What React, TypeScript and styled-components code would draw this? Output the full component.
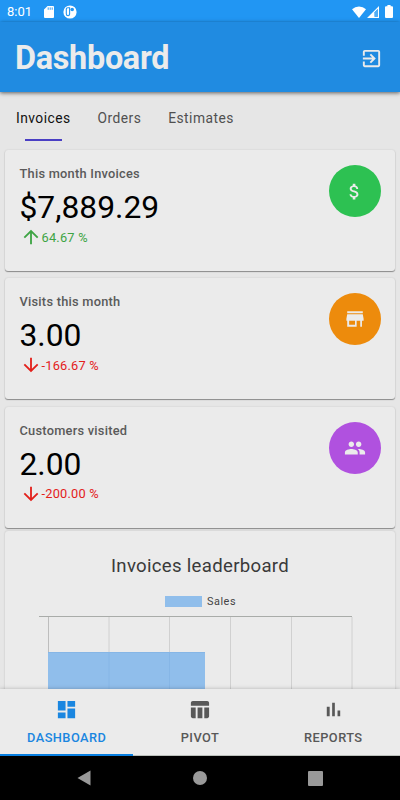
import React from 'react';
import styled, { createGlobalStyle } from 'styled-components';

const GlobalStyle = createGlobalStyle`
  * { box-sizing: border-box; }
  body { margin: 0; font-family: Roboto, sans-serif; background: #e6e6e6; }
`;

const Screen = styled.div`
  width: 400px;
  height: 800px;
  display: flex;
  flex-direction: column;
  overflow: hidden;
  background: #e6e6e6;
`;

const StatusBar = styled.div`
  height: 22px;
  flex: none;
  display: flex;
  align-items: center;
  padding: 1px 5px 0 7px;
  background: #2196f3;
  color: #fff;
`;

const Clock = styled.span`
  width: 37px;
  font-size: 13px;
  line-height: 20px;
`;

const StatusIcon = styled.svg<{ $gap?: number }>`
  display: block;
  flex: none;
  margin-right: ${(p) => p.$gap ?? 0}px;
`;

const Spacer = styled.div`
  flex: 1;
`;

const Header = styled.header`
  height: 70px;
  flex: none;
  display: flex;
  align-items: center;
  justify-content: space-between;
  padding: 2px 17px 0 15px;
  background: #208be1;
  box-shadow: 0 1px 4px rgba(0, 0, 0, 0.6);
  z-index: 1;
`;

const Title = styled.h1`
  margin: 0;
  font-size: 32.4px;
  line-height: 68px;
  font-weight: 700;
  letter-spacing: -0.3px;
  color: #ebebeb;
`;

const Icon = styled.svg`
  display: block;
  flex: none;
`;

const Main = styled.main`
  flex: 1;
  min-height: 0;
  overflow: hidden;
`;

const Tabs = styled.nav`
  height: 58px;
  display: flex;
  gap: 27px;
  padding: 17px 16px 0;
`;

const Tab = styled.div<{ $active?: boolean }>`
  display: flex;
  flex-direction: column;
  align-items: center;
  gap: 11px;
  font-size: 13.8px;
  line-height: 19px;
  letter-spacing: 0.46px;
  color: ${(p) => (p.$active ? '#111' : '#505050')};
`;

const TabLine = styled.div`
  width: 37px;
  height: 2px;
  background: #4a3fc4;
`;

const Card = styled.section<{ $gap: number }>`
  height: 121px;
  margin: 0 5px ${(p) => p.$gap}px;
  padding: 15px 14.5px 0;
  display: flex;
  justify-content: space-between;
  border-radius: 3px;
  background: #ebebeb;
  box-shadow: 0 1px 1px rgba(0, 0, 0, 0.38), 0 0 2px rgba(0, 0, 0, 0.12);
`;

const CardLabel = styled.div`
  font-size: 12.8px;
  line-height: 18px;
  font-weight: 500;
  letter-spacing: 0.25px;
  color: #5a5a5a;
`;

const CardValue = styled.div`
  margin-top: 5px;
  font-size: 31.8px;
  line-height: 38px;
  color: #000;
  font-weight: 400;
`;

const Trend = styled.div<{ $up: boolean }>`
  display: flex;
  align-items: center;
  height: 22px;
  font-size: 12.8px;
  letter-spacing: 0.22px;
  color: ${(p) => (p.$up ? '#3da444' : '#e3201b')};
  font-weight: 400;
`;

const Badge = styled.div<{ $color: string }>`
  width: 52px;
  height: 52px;
  flex: none;
  display: flex;
  align-items: center;
  justify-content: center;
  border-radius: 50%;
  background: ${(p) => p.$color};
`;

const ChartCard = styled.section`
  height: 240px;
  margin: 0 5px;
  padding-top: 21px;
  border-radius: 3px;
  background: #ebebeb;
  box-shadow: 0 0 2px rgba(0, 0, 0, 0.2);
`;

const ChartTitle = styled.h2`
  margin: 0;
  font-size: 18.6px;
  line-height: 28px;
  font-weight: 400;
  letter-spacing: 0.3px;
  text-align: center;
  color: #3a3a3a;
`;

const Legend = styled.div`
  margin-top: 14px;
  height: 14px;
  display: flex;
  align-items: center;
  justify-content: center;
  gap: 5px;
  padding-left: 1px;
  font-size: 10.9px;
  letter-spacing: 0.55px;
  color: #444;
`;

const Swatch = styled.span`
  width: 37px;
  height: 11px;
  background: #90beeb;
`;

const Plot = styled.svg`
  display: block;
  margin: 8px 0 0 34px;
`;

const BottomTabs = styled.nav`
  height: 67px;
  flex: none;
  display: grid;
  grid-template-columns: repeat(3, 1fr);
  background: #ebebeb;
  box-shadow: 0 0 4px rgba(0, 0, 0, 0.25);
  z-index: 1;
`;

const BottomTab = styled.div<{ $active?: boolean }>`
  display: flex;
  flex-direction: column;
  align-items: center;
  gap: 7px;
  padding-top: 9px;
  border-bottom: ${(p) => (p.$active ? '2px solid #087fe0' : '1px solid #bbc0bb')};
  font-size: 12.8px;
  line-height: 20px;
  font-weight: 500;
  letter-spacing: 0.45px;
  color: ${(p) => (p.$active ? '#1a86e0' : '#585858')};
`;

const SystemNav = styled.div`
  height: 44px;
  flex: none;
  display: flex;
  align-items: center;
  justify-content: space-between;
  padding: 0 77px;
  background: #000;
`;

const paths = {
  exit: 'M10.09 15.59L11.5 17l5-5-5-5-1.41 1.41L12.67 11H3v2h9.67l-2.58 2.59zM19 3H5c-1.11 0-2 .9-2 2v4h2V5h14v14H5v-4H3v4c0 1.1.89 2 2 2h14c1.1 0 2-.9 2-2V5c0-1.1-.9-2-2-2z',
  up: 'M4 12l1.41 1.41L11 7.83V20h2V7.83l5.58 5.59L20 12l-8-8-8 8z',
  down: 'M20 12l-1.41-1.41L13 16.17V4h-2v12.17l-5.58-5.59L4 12l8 8 8-8z',
  dollar:
    'M11.8 10.9c-2.27-.59-3-1.2-3-2.15 0-1.09 1.01-1.85 2.7-1.85 1.78 0 2.44.85 2.5 2.1h2.21c-.07-1.72-1.12-3.3-3.21-3.81V3h-3v2.16c-1.94.42-3.5 1.68-3.5 3.61 0 2.31 1.91 3.46 4.7 4.13 2.5.6 3 1.48 3 2.41 0 .69-.49 1.79-2.7 1.79-2.06 0-2.87-.92-2.98-2.1h-2.2c.12 2.19 1.76 3.42 3.68 3.83V21h3v-2.15c1.95-.37 3.5-1.5 3.5-3.55 0-2.84-2.43-3.81-4.7-4.4z',
  store: 'M20.5 3.6h-17v2.2h17zM21.4 14v-2.2l-.9-5.1h-17l-.9 5.1V14h.9v6.4h10.3V14h3.9v6.4h1.9V14zM12 18.2H5.6V14H12z',
  people:
    'M16 11c1.66 0 2.99-1.34 2.99-3S17.66 5 16 5c-1.66 0-3 1.34-3 3s1.34 3 3 3zm-8 0c1.66 0 2.99-1.34 2.99-3S9.66 5 8 5C6.34 5 5 6.34 5 8s1.34 3 3 3zm0 2c-2.33 0-7 1.17-7 3.5V19h14v-2.5c0-2.33-4.67-3.5-7-3.5zm8 0c-.29 0-.62.02-.97.05 1.16.84 1.97 1.97 1.97 3.45V19h6v-2.5c0-2.33-4.67-3.5-7-3.5z',
  dashboard: 'M3 13h8V3H3v10zm0 8h8v-6H3v6zm10 0h8V11h-8v10zm0-18v6h8V3h-8z',
  pivot:
    'M10 10.02h5V21h-5V10.02zM17 21h3c1.1 0 2-.9 2-2v-9h-5v11zm3-18H5c-1.1 0-2 .9-2 2v3h19V5c0-1.1-.9-2-2-2zM3 19c0 1.1.9 2 2 2h3V10H3v9z',
  reports: 'M5 9.2h3V19H5zM10.6 5h2.8v14h-2.8zm5.6 8H19v6h-2.8z',
};

type Glyph = keyof typeof paths;

const Material = ({ name, size, color = 'currentColor' }: { name: Glyph; size: number; color?: string }) => (
  <Icon width={size} height={size} viewBox="0 0 24 24" fill={color} fillRule="evenodd">
    <path d={paths[name]} />
  </Icon>
);

const cards: { label: string; value: string; trend: string; up: boolean; color: string; icon: Glyph; gap: number }[] = [
  { label: 'This month Invoices', value: '$7,889.29', trend: '64.67 %', up: true, color: '#2dc152', icon: 'dollar', gap: 7 },
  { label: 'Visits this month', value: '3.00', trend: '-166.67 %', up: false, color: '#ed8b0c', icon: 'store', gap: 7.5 },
  { label: 'Customers visited', value: '2.00', trend: '-200.00 %', up: false, color: '#b051df', icon: 'people', gap: 3.5 },
];

const bottomTabs: { label: string; icon: Glyph }[] = [
  { label: 'DASHBOARD', icon: 'dashboard' },
  { label: 'PIVOT', icon: 'pivot' },
  { label: 'REPORTS', icon: 'reports' },
];

export default function App() {
  return (
    <Screen>
      <GlobalStyle />
      <StatusBar>
        <Clock>8:01</Clock>
        <StatusIcon width="10" height="12" viewBox="0 0 10 12" $gap={9}>
          <path d="M3.6 0H9a1 1 0 0 1 1 1v10a1 1 0 0 1-1 1H1a1 1 0 0 1-1-1V3.6z" fill="#fff" />
          <path d="M4.2 1.4v2.4M6.2 1.4v2.4M8.2 1.4v2.4" stroke="#2196f3" strokeWidth="0.9" />
        </StatusIcon>
        <StatusIcon width="14" height="14" viewBox="0 0 14 14">
          <circle cx="7" cy="7" r="6.6" fill="#fff" />
          <path d="M6.6 2.8H4.8Q3.3 2.8 3.3 4.3v4.4q0 2 1.8 2 1.5 0 1.5-2z" fill="none" stroke="#2196f3" strokeWidth="1.1" />
          <circle cx="9.2" cy="4.5" r="1.8" fill="#2196f3" />
        </StatusIcon>
        <Spacer />
        <StatusIcon width="14" height="12" viewBox="0 0 14 12" $gap={1}>
          <path d="M7 12L0 3.2Q3 .5 7 .5t7 2.7z" fill="#fff" />
        </StatusIcon>
        <StatusIcon width="12" height="12" viewBox="0 0 12 12" $gap={6}>
          <path d="M12 0v12H0zM10.8 3L7.6 6.2v4.6h3.2z" fill="#fff" fillRule="evenodd" />
          <path d="M7.6 6.2l3.2-3.2v7.8H7.6z" fill="#52aef6" />
        </StatusIcon>
        <StatusIcon width="8" height="13" viewBox="0 0 8 13" $gap={2}>
          <path d="M2.4 0h3.2v1.2H7a1 1 0 0 1 1 1V12a1 1 0 0 1-1 1H1a1 1 0 0 1-1-1V2.2a1 1 0 0 1 1-1h1.4z" fill="#fff" />
        </StatusIcon>
      </StatusBar>
      <Header>
        <Title>Dashboard</Title>
        <Material name="exit" size={23} color="#ebebeb" />
      </Header>
      <Main>
        <Tabs>
          <Tab $active>
            Invoices
            <TabLine />
          </Tab>
          <Tab>Orders</Tab>
          <Tab>Estimates</Tab>
        </Tabs>
        {cards.map((c) => (
          <Card key={c.label} $gap={c.gap}>
            <div>
              <CardLabel>{c.label}</CardLabel>
              <CardValue>{c.value}</CardValue>
              <Trend $up={c.up}>
                <Material name={c.up ? 'up' : 'down'} size={22} />
                {c.trend}
              </Trend>
            </div>
            <Badge $color={c.color}>
              <Material name={c.icon} size={c.icon === 'dollar' ? 21 : 22} color="#ebebeb" />
            </Badge>
          </Card>
        ))}
        <ChartCard>
          <ChartTitle>Invoices leaderboard</ChartTitle>
          <Legend>
            <Swatch />
            Sales
          </Legend>
          <Plot width="316" height="100" viewBox="0 0 316 100">
            <path d="M9.5 1v99" stroke="#bdbdbd" />
            <path d="M70 1v99M130.5 1v99M191.5 1v99M252.5 1v99M313 1v99" stroke="#d0d0d0" />
            <path d="M0 .5h313" stroke="#a9aca9" />
            <rect x="9" y="36" width="157" height="64" fill="#90beeb" />
            <path d="M9 36.5h157M70 36v64M130.5 36v64" stroke="#86b6e6" fill="none" />
          </Plot>
        </ChartCard>
      </Main>
      <BottomTabs>
        {bottomTabs.map((t, i) => (
          <BottomTab key={t.label} $active={i === 0}>
            <Material name={t.icon} size={23} />
            {t.label}
          </BottomTab>
        ))}
      </BottomTabs>
      <SystemNav>
        <Icon width="14" height="16" viewBox="0 0 14 16">
          <path d="M13.5.5v15L.5 8z" fill="#999" />
        </Icon>
        <Icon width="14" height="14" viewBox="0 0 14 14">
          <circle cx="7" cy="7" r="7" fill="#999" />
        </Icon>
        <Icon width="15" height="15" viewBox="0 0 15 15">
          <rect width="15" height="15" rx="1" fill="#999" />
        </Icon>
      </SystemNav>
    </Screen>
  );
}
